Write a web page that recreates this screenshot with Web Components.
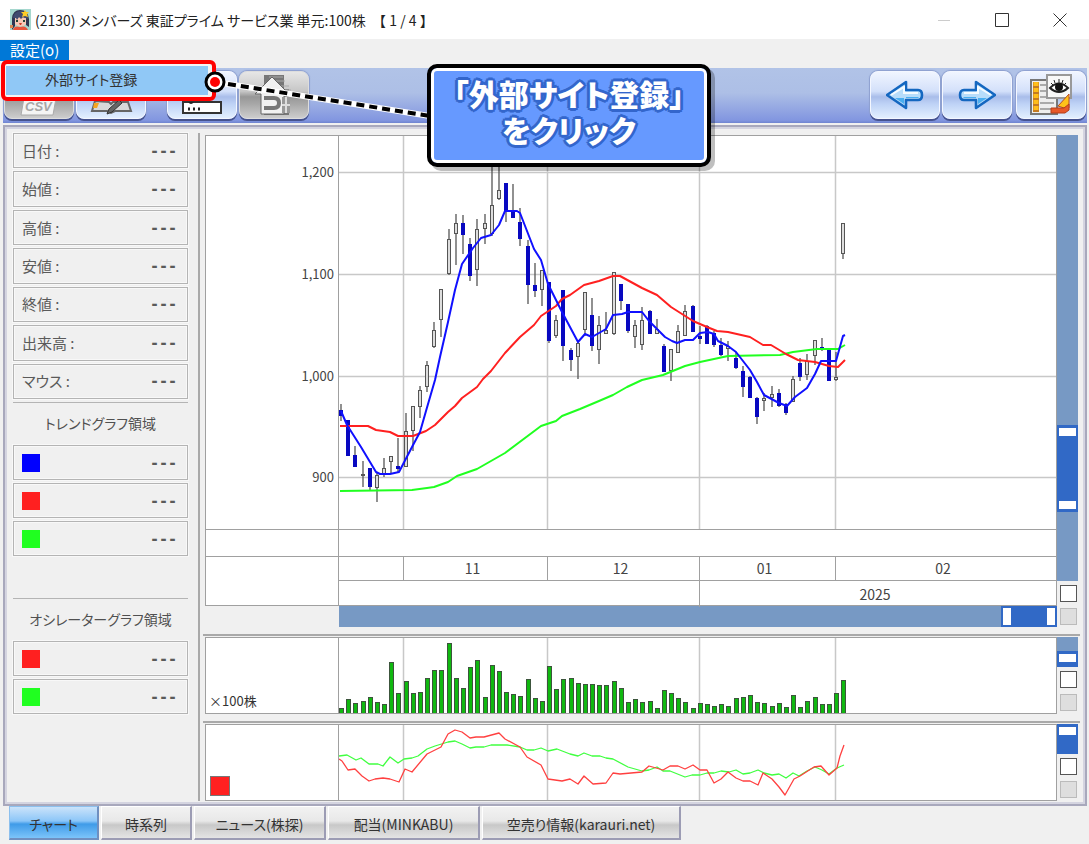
<!DOCTYPE html>
<html lang="ja">
<head>
<meta charset="utf-8">
<title>(2130) メンバーズ</title>
<style>
    :root {
        --line: #a0a0a0;
        --grid: #c8c8c8;
        --track: #7799c4;
        --thumb: #3169c6;
        --text: #505050;
    }
    body {
        margin: 0;
        background: #f0f0f0;
        color: var(--text);
        font-family: "Noto Sans CJK JP", "Liberation Sans", sans-serif;
        font-size: 15px;
        font-feature-settings: "palt";
    }
</style>
</head>
<body>
<chart-window></chart-window>

<script>
// --- Shared base: every element renders its markup into an open shadow root --- //
class BaseElement extends HTMLElement {
    constructor() {
        super();
        this.attachShadow({ mode: 'open' });
    }

    connectedCallback() {
        this.shadowRoot.innerHTML = this.render();
    }
}

// --- Title bar --- //
customElements.define('title-bar', class extends BaseElement {
    render() {
        return `
            <style>
                :host { display: flex; align-items: center; height: 39px; padding-left: 10px; background: #fff; color: #222; }
                .title { flex: 1; margin: 0 0 0 4px; font-size: 14px; font-weight: 400; line-height: 24px; white-space: pre; }
                .page { font-feature-settings: normal; }
                button { width: 58px; height: 39px; padding: 0; border: 0; background: none; }
                svg { display: block; margin: auto; }
                .logo { margin: 0; }
            </style>
            <svg class="logo" width="21" height="21" viewBox="0 0 21 21" aria-hidden="true">
                <rect width="21" height="21" fill="#a5d7ce"/>
                <path d="M2 21V9Q3 1 10 1q8 0 9 9v8l-3-2V9H5v8Z" fill="#303652"/>
                <path d="M5 9q5-2 11 0v6q-5 5-11 0Z" fill="#f7c9b6"/>
                <path d="M3 9q1-7 8-7 6 0 7 8l-5-2-2 2-2-2-2 3-1-2Z" fill="#414a70"/>
                <path d="M6 12h2M13 12h2" stroke="#243" stroke-width="2"/>
                <path d="M9 14h3l-1 2h-1Z" fill="#d23b2b"/>
                <path d="M3 21q1-5 7-3 6-2 8 3Z" fill="#e8553c"/>
                <path d="m15 1 1 2 3 0-2 2 1 3-3-1-3 1 1-3-2-2h3Z" fill="#ffcc25"/>
                <rect x="0" y="16" width="3" height="3" fill="#d98850"/>
            </svg>
            <h1 class="title">(2130) メンバーズ 東証プライム サービス業 単元:100株 <span class="page"> 【 1 / 4 】</span></h1>
            <button aria-label="最小化"><svg width="14" height="14"><path d="M1 7.5h12" stroke="#ccc"/></svg></button>
            <button aria-label="最大化"><svg width="14" height="14"><path d="M.5.5h13v13H.5Z" fill="none" stroke="#333"/></svg></button>
            <button aria-label="閉じる"><svg width="14" height="14"><path d="m.5.5 13 13m0-13-13 13" stroke="#333"/></svg></button>
        `;
    }
});

// --- Menu bar with its open drop-down --- //
customElements.define('menu-bar', class extends BaseElement {
    render() {
        return `
            <style>
                :host { display: block; position: relative; height: 29px; z-index: 2; }
                button { box-sizing: border-box; font: inherit; font-feature-settings: inherit; border: 0; padding: 0; }
                .top { height: 21px; padding: 0 10px; background: #0078d7; color: #fff; line-height: 20px; }
                .menu {
                    position: absolute; left: 1px; top: 21px; width: 205px; padding: 2px 1px 2px;
                    background: #f4f4f4; border: 4px solid #f00; border-radius: 6px;
                }
                .menu button { display: block; width: 202px; height: 29px; padding: 0 0 3px 39px; background: #90c8f6; color: #333; font-size: 14px; line-height: 24px; text-align: left; }
            </style>
            <button class="top" aria-expanded="true">設定(o)</button>
            <div class="menu"><button>外部サイト登録</button></div>
        `;
    }
});

// --- Toolbar --- //
customElements.define('tool-button', class extends BaseElement {
    render() {
        return `
            <style>
                :host { display: block; }
                button {
                    display: grid; place-items: center; box-sizing: border-box; width: 70px; height: 48px; padding: 0;
                    border: 1px solid #f4f7ff; border-radius: 8px;
                    background: linear-gradient(#f0f5ff, #d3e0fa 42%, #a9bdea 54%, #bfd3f6 70%, #e2efff);
                    box-shadow: 0 2px 0 #45528e, 0 0 1px 1px #8d9fcf;
                }
                :host([muted]) button {
                    border-color: #ddd;
                    background: linear-gradient(#e6e6e6, #c6c6c6 42%, #979797 54%, #a8a8a8 70%, #cdcdcd);
                }
            </style>
            <button aria-label="${this.getAttribute('label')}"><slot></slot></button>
        `;
    }
});

customElements.define('tool-bar', class extends BaseElement {
    render() {
        return `
            <style>
                :host {
                    display: flex; gap: 2px; box-sizing: border-box; height: 55px; margin: 0 2px 0 3px; padding: 3px 1px 0;
                    background: linear-gradient(#b1c3e7, #adbfe6 45%, #8296e0 95%, #6f84d0);
                }
                .gap { width: 17px; }
                .space { flex: 1; }
                .last { margin-left: 2px; }
                svg { display: block; }
                text { font: italic bold 13px "Liberation Sans", sans-serif; }
            </style>
            <tool-button muted label="CSV">
                <svg width="44" height="44">
                    <path d="M10 4h25v20H10Z" fill="#ddd" stroke="#888"/>
                    <path d="M7 25h32l-3 17H4Z" fill="#f4f4f4" stroke="#aaa"/>
                    <text x="8" y="38" fill="#a6a6a6">CSV</text>
                </svg>
            </tool-button>
            <tool-button label="編集">
                <svg width="44" height="44">
                    <path d="m6 28 14 1 2 2 2-2h15l3 9H26l-4 2-4-2H3Z" fill="#d8d8d8" stroke="#666" stroke-width="2"/>
                    <path d="m5 30 5 0-2 5H4Z" fill="#f5a623"/>
                    <path d="m18 41 2-5 10-9 3 3-10 9Z" fill="#666" stroke="#333"/>
                </svg>
            </tool-button>
            <div class="gap"></div>
            <tool-button label="一覧">
                <svg width="44" height="44">
                    <rect x="3" y="29" width="38" height="11" fill="#fff" stroke="#333" stroke-width="2"/>
                    <path d="M8 29q3 4 6 0Z" fill="#222"/>
                    <path d="M8 36h2m3 0h2m3 0h2" stroke="#222" stroke-width="3"/>
                </svg>
            </tool-button>
            <tool-button muted label="ホーム">
                <svg width="44" height="44">
                    <path d="M12 2h20v14h5v26H12Z" fill="#777"/>
                    <path d="M17 4h14M17 8h16M22 13h15M25 17h14" stroke="#aaa"/>
                    <path d="m20 4 17 17h-5v20H9V21H3Z" fill="#f1f1f1" stroke="#666"/>
                    <path d="M12 25h10q5 0 5 5t-5 5H12" fill="none" stroke="#777" stroke-width="4"/>
                    <path d="M30 24h8v16h-8Z" fill="#999"/>
                    <path d="M34 24v16m-4-8h8" stroke="#ddd" stroke-width="2"/>
                </svg>
            </tool-button>
            <div class="space"></div>
            <tool-button label="前へ">
                <svg width="38" height="32">
                    <path d="M1 16 20 3v8h12q4 0 4 5t-4 5H20v8Z" fill="#b8ddfa" stroke="#1467c0" stroke-width="2.6" stroke-linejoin="round"/>
                    <path d="m5 16 13-8v6h14" fill="none" stroke="#f5fbff" stroke-width="2"/>
                    <path d="M9 19h9v6ZM20 18h13l-1 1H20Z" fill="#4aaef0"/>
                </svg>
            </tool-button>
            <tool-button label="次へ">
                <svg width="38" height="32">
                    <path d="M37 16 18 3v8H6q-4 0-4 5t4 5h12v8Z" fill="#b8ddfa" stroke="#1467c0" stroke-width="2.6" stroke-linejoin="round"/>
                    <path d="M33 16 20 8v6H6" fill="none" stroke="#f5fbff" stroke-width="2"/>
                    <path d="M29 19h-9v6ZM18 18H5l1 1h12Z" fill="#4aaef0"/>
                </svg>
            </tool-button>
            <tool-button class="last" label="表示設定">
                <svg width="44" height="44">
                    <path d="M2 7h26v34H2Z" fill="#eee" stroke="#777" stroke-width="2"/>
                    <path d="M11 12h8M11 18h14M11 24h12M11 30h14M11 36h16" stroke="#aaa" stroke-width="2"/>
                    <path d="M7 9v30" stroke="#c47b22" stroke-width="6"/>
                    <path d="M7 9v30" stroke="#ffbe1a" stroke-width="5" stroke-dasharray="4 2"/>
                    <path d="M18 2h24v23H18Z" fill="#f8f8f8" stroke="#999" stroke-width="2"/>
                    <path d="M21 15q9-9 18 0-9 8-18 0Z" fill="#fff" stroke="#222" stroke-width="2"/>
                    <circle cx="30" cy="14" r="4" fill="#111"/>
                    <path d="M30 6v5M25 7l1 3m8-3-1 3m-11 0 2 2m13-2-2 2" stroke="#222"/>
                    <path d="m29 33 11-12v14h-5Z" fill="#ffc21a" stroke="#b94a22"/>
                    <path d="M22 35h13l5-4v6l-4 3H22Z" fill="#e8592a" stroke="#b33f1a"/>
                </svg>
            </tool-button>
        `;
    }
});

// --- Side panel --- //
customElements.define('value-row', class extends BaseElement {
    render() {
        const color = this.getAttribute('color');
        return `
            <style>
                :host {
                    display: flex; align-items: center; justify-content: space-between; box-sizing: border-box; min-height: 35px; padding: 0 10px 0 8px;
                    border: 1px solid #b4b4b4; box-shadow: inset 0 0 0 1px #f8f8f8, 0 0 0 1px #f8f8f8; color: #5a5a5a; line-height: 20px;
                }
                i { display: block; width: 18px; height: 18px; background: ${color}; }
                output { font-family: "DejaVu Sans Mono", monospace; font-weight: 700; line-height: 18px; }
            </style>
            ${color ? '<i></i>' : '<span><slot></slot></span>'}
            <output>---</output>
        `;
    }
});

customElements.define('side-panel', class extends BaseElement {
    render() {
        return `
            <style>
                :host { display: block; width: 175px; padding-right: 10px; border-right: 2px solid #a9a9a9; }
                .rows { display: grid; gap: 3px; }
                .quote { height: 266px; }
                h2 { margin: 3px 0 0; padding: 7px 0 9px; border-top: 1px solid #b4b4b4; font-size: 14px; font-weight: 400; line-height: 26px; text-align: center; }
                .trend { margin-bottom: 42px; }
            </style>
            <div class="rows quote">
                <value-row>日付 :</value-row>
                <value-row>始値 :</value-row>
                <value-row>高値 :</value-row>
                <value-row>安値 :</value-row>
                <value-row>終値 :</value-row>
                <value-row>出来高 :</value-row>
                <value-row>マウス :</value-row>
            </div>
            <h2>トレンドグラフ領域</h2>
            <div class="rows trend">
                <value-row color="#0000ff"></value-row>
                <value-row color="#ff2020"></value-row>
                <value-row color="#20ff20"></value-row>
            </div>
            <h2>オシレーターグラフ領域</h2>
            <div class="rows">
                <value-row color="#ff2020"></value-row>
                <value-row color="#20ff20"></value-row>
            </div>
        `;
    }
});

// --- Vertical range bar with the two tick boxes under it --- //
customElements.define('range-column', class extends BaseElement {
    render() {
        const start = this.getAttribute('start');
        const size = this.getAttribute('size');
        return `
            <style>
                :host { display: flex; flex-direction: column; width: 21px; }
                .track { height: ${this.getAttribute('track')}px; background: var(--track); overflow: hidden; }
                .thumb {
                    display: flex; flex-direction: column; justify-content: space-between; box-sizing: border-box;
                    height: ${size}px; margin-top: ${start}px; padding: 3px 2px; background: var(--thumb);
                }
                .thumb b { height: 8px; background: #fff; }
                .boxes { display: grid; gap: 6px; padding: 4px 0 0 3px; }
                input { appearance: none; box-sizing: border-box; width: 17px; height: 17px; margin: 0; border: 1px solid #555; background: #fff; }
                input:disabled { border-color: #bbb; background: #dedede; }
            </style>
            <div class="track"><div class="thumb"><b></b>${size > 40 ? '<b></b>' : ''}</div></div>
            <div class="boxes">
                <input type="checkbox" aria-label="固定">
                <input type="checkbox" aria-label="自動" disabled>
            </div>
        `;
    }
});

// --- Charts --- //
const FIRST_X = 2;
const STEP = 7.175;
const MONTHS = [64, 208, 360, 496];

// high, body top, body bottom, low, falling
const candles = [
    [404,410,415,420,1], [420,420,455,455,1], [446,455,466,466,1], [461,474,475,486,0], [468,468,486,489,1],
    [472,475,487,501,0], [458,468,473,476,0], [456,456,461,473,0], [438,466,468,472,1], [413,431,466,466,0],
    [406,406,430,450,0], [386,390,406,417,0], [361,365,386,391,0], [322,330,346,347,0], [289,289,319,336,0],
    [229,239,273,274,0], [214,223,233,264,0], [215,223,234,253,1], [238,244,275,280,1], [219,229,269,285,0],
    [214,223,228,243,0], [160,205,233,235,0], [150,190,198,199,0], [183,183,210,221,1], [184,211,217,217,1],
    [208,222,238,245,1], [240,246,284,303,1], [263,285,290,296,1], [270,270,289,305,0], [282,282,340,342,1],
    [315,320,335,337,0], [290,290,345,360,1], [348,350,359,370,1], [340,343,356,378,0], [292,292,329,335,0],
    [298,315,345,350,1], [316,325,349,363,0], [312,330,333,333,0], [272,272,333,334,0], [284,284,300,309,1],
    [304,304,330,332,1], [320,325,336,347,0], [307,320,344,349,0], [310,311,333,333,1], [319,329,333,333,0],
    [344,346,371,371,1], [349,349,370,380,0], [325,331,352,352,0], [305,311,335,335,0], [305,306,331,331,1],
    [326,336,338,343,1], [325,326,343,343,1], [331,333,344,346,1], [338,345,354,355,1], [341,346,348,360,0],
    [352,358,367,368,1], [366,371,386,396,1], [376,377,397,397,1], [397,398,416,423,1], [393,398,400,410,0],
    [386,394,397,406,0], [389,393,405,406,1], [403,404,412,414,1], [376,379,401,401,0], [358,363,376,380,1],
    [354,361,374,379,0], [340,340,355,364,0], [338,347,348,350,1], [350,350,380,380,1], [352,377,379,380,0],
    [223,223,253,258,0]
];

const averages = [
    ['#20ff20', '340,491 412,490 427,488 434,487 448,482 457,476 477,469 491,461 505,453 541,426 556,421 562,416 580,409 599,401 613,395 627,387 642,380 663,375 685,366 700,362 728,356 780,355 793,352 817,349 838,349 845,345'],
    ['#ff2020', '340,426 368,426 376,430 390,432 398,436 413,436 426,431 435,425 448,412 455,406 462,398 477,387 483,379 491,371 505,353 520,337 534,325 541,316 556,306 562,299 570,295 584,285 599,281 613,276 620,276 642,288 657,295 671,307 693,321 707,327 717,331 728,332 750,337 763,345 771,345 786,354 798,360 815,362 829,366 838,367 845,360'],
    ['#1010ff', '341,411 347,425 361,447 376,472 380,474 390,474 399,472 412,447 420,432 426,411 435,380 440,357 448,322 455,290 462,264 473,248 481,238 491,235 499,225 505,211 517,211 520,213 534,249 541,260 548,284 562,312 578,342 585,334 592,337 599,333 606,329 613,315 622,314 628,312 642,312 649,321 657,329 665,337 672,341 677,343 685,340 693,340 700,333 708,332 714,334 718,341 728,346 736,352 750,370 757,382 764,395 779,403 787,406 795,397 807,388 815,374 821,361 836,361 843,336 845,335']
];

const volumes = [
    5,14,10,12,16,11,9,51,20,32,20,21,35,43,43,70,35,25,46,53,16,48,42,21,19,17,34,15,12,47,24,34,35,30,29,29,
    28,28,32,25,11,14,11,12,5,23,20,15,11,5,10,9,7,9,7,15,16,18,11,10,7,10,6,18,6,12,16,9,9,20,33
];

const oscillators = [
    ['#40ff40', '0,31 8,30 17,35 22,33 30,39 39,39 44,41 51,32 59,38 65,34 73,33 79,31 88,24 96,21 109,17 116,16 123,19 131,23 137,22 145,22 152,20 168,20 181,22 188,25 195,25 202,23 209,26 218,24 231,29 239,31 245,28 253,31 261,31 267,33 274,34 289,42 303,46 310,45 318,42 324,46 331,46 346,52 353,50 361,50 368,48 375,48 382,46 390,47 397,45 404,49 411,48 419,45 425,48 433,50 440,49 447,53 454,48 460,51 468,46 476,42 483,45 490,49 498,43 505,40'],
    ['#ff4040', '0,34 3,36 9,45 16,44 23,51 30,56 36,54 44,53 51,54 60,57 66,44 73,47 88,29 102,22 109,9 116,5 123,7 131,13 137,12 145,12 160,8 166,14 181,22 188,32 202,40 209,54 223,56 231,54 239,59 245,51 254,59 267,58 274,48 281,49 303,47 310,41 324,45 331,41 339,41 346,44 354,40 361,45 368,45 375,58 382,54 389,47 397,53 404,56 411,56 419,60 424,48 433,54 440,62 446,70 455,54 461,51 475,42 482,41 490,50 498,43 501,31 505,20']
];

const monthLines = () => MONTHS.map(x => `<path class="grid" d="M${x}.5 0v400"/>`).join('');
const polylines = (list, width) => list.map(([color, points]) =>
    `<polyline points="${points}" fill="none" stroke="${color}" stroke-width="${width}" stroke-linejoin="round"/>`).join('');

const chartStyle = `
    :host { display: grid; grid-template-columns: 1fr 21px; padding: 0 2px; }
    .frame { border: 1px solid var(--line); background: #fff; }
    .row { display: grid; grid-template-columns: 133px 1fr; }
    .axis { box-sizing: border-box; border-right: 1px solid var(--line); font-size: 13px; }
    .grid { stroke: var(--grid); stroke-width: 1.5; }
    svg { display: block; width: 100%; overflow: hidden; }
`;

customElements.define('price-chart', class extends BaseElement {
    render() {
        const scale = [[36, '1,200'], [138, '1,100'], [240, '1,000'], [341, '900']];
        const sticks = candles.map(([high, top, bottom, low, falling], i) => {
            const x = Math.round(FIRST_X + i * STEP);
            const body = falling
                ? `<rect x="${x - 2}" y="${top}" width="4" height="${bottom - top + 1}" fill="#0808c0"/>`
                : `<rect x="${x - 1.5}" y="${top + .5}" width="3" height="${Math.max(bottom - top, 1)}" fill="#ddd" stroke="#555"/>`;
            return `<path d="M${x} ${high}V${low + 1}" stroke="#555" stroke-width="1.3"/>${body}`;
        }).join('');
        return `
            <style>
                ${chartStyle}
                .price { height: 393px; border-bottom: 1px solid var(--line); }
                .price svg { height: 393px; }
                .blank { height: 26px; border-bottom: 1px solid var(--line); }
                .dates { height: 48px; color: #444; font-size: 14px; text-align: center; }
                .months { display: grid; grid-template-columns: 65px 144px 152px 136px 1fr; height: 23px; border-bottom: 1px solid var(--line); line-height: 22px; }
                .months span, .years span { box-sizing: border-box; padding-right: 6px; }
                .months span:not(:last-child), .years span:first-child { border-right: 1px solid var(--line); }
                .years { display: grid; grid-template-columns: 361px 1fr; height: 24px; line-height: 26px; }
                .bar { display: flex; justify-content: flex-end; height: 21px; margin-left: 134px; background: var(--track); }
                .thumb { display: flex; justify-content: space-between; box-sizing: border-box; width: 56px; padding: 2px; background: var(--thumb); }
                .thumb b { width: 8px; background: #fff; }
                text { font-size: 13px; fill: #444; text-anchor: end; }
            </style>
            <div>
                <div class="frame">
                    <div class="row price">
                        <div class="axis"><svg>${scale.map(([y, label]) => `<text x="128" y="${y + 5}">${label}</text>`).join('')}</svg></div>
                        <svg>
                            ${scale.map(([y]) => `<line class="grid" x1="0" x2="100%" y1="${y}.5" y2="${y}.5"/>`).join('')}
                            ${monthLines()}
                            <g transform="translate(0 -136)">${sticks}</g>
                            <g transform="translate(-339 -136)">${polylines(averages, 2)}</g>
                        </svg>
                    </div>
                    <div class="row blank"><div class="axis"></div></div>
                    <div class="row dates">
                        <div class="axis"></div>
                        <div>
                            <div class="months"><span></span><span>11</span><span>12</span><span>01</span><span>02</span></div>
                            <div class="years"><span></span><span>2025</span></div>
                        </div>
                    </div>
                </div>
                <div class="bar"><div class="thumb"><b></b><b></b></div></div>
            </div>
            <range-column track="446" start="290" size="87"></range-column>
        `;
    }
});

customElements.define('volume-chart', class extends BaseElement {
    render() {
        return `
            <style>
                ${chartStyle}
                .row, .row svg { height: 75px; }
                .axis { display: flex; align-items: flex-end; padding: 0 0 3px 3px; color: #333; }
            </style>
            <div class="frame row">
                <div class="axis">×100株</div>
                <svg>
                    ${monthLines()}
                    ${volumes.map((h, i) => `<rect x="${Math.round(i * STEP) + .5}" y="${75.5 - h}" width="4" height="${h}" fill="#10b810" stroke="#3c553c"/>`).join('')}
                </svg>
            </div>
            <range-column track="30" start="14" size="16"></range-column>
        `;
    }
});

customElements.define('oscillator-chart', class extends BaseElement {
    render() {
        return `
            <style>
                ${chartStyle}
                .row, .row svg { height: 75px; }
                .axis { display: flex; align-items: flex-end; padding: 0 0 4px 4px; }
                i { width: 18px; height: 18px; border: 1px solid #777; background: #ff2020; }
            </style>
            <div class="frame row">
                <div class="axis"><i></i></div>
                <svg>${monthLines()}${polylines(oscillators, 1.3)}</svg>
            </div>
            <range-column track="30" start="0" size="30"></range-column>
        `;
    }
});

// --- Bottom tabs --- //
customElements.define('tab-bar', class extends BaseElement {
    render() {
        const tabs = ['チャート', '時系列', 'ニュース(株探)', '配当(MINKABU)', '空売り情報(karauri.net)'];
        return `
            <style>
                :host { display: grid; grid-template-columns: 90px 91px 132px 152px 199px; gap: 2px; padding: 0 9px 4px; }
                button {
                    height: 34px; padding: 3px 0 0; border: 1px solid #fff; border-right: 2px solid #9c9cb4; border-bottom: 2px solid #9c9cb4;
                    background: linear-gradient(#f2f2f2, #e8e8e8 45%, #c8c8c8 58%, #e4e4e4);
                    color: #333; font: inherit; font-size: 14px; font-feature-settings: inherit;
                }
                button[aria-selected="true"] { border-color: #8cc0ee #6f8fc0 #6f8fc0 #8cc0ee; background: linear-gradient(#cbe3fa, #8cc6f8 45%, #3f9be8 55%, #7cc4fa); }
            </style>
            ${tabs.map((tab, i) => `<button role="tab" aria-selected="${i === 0}">${tab}</button>`).join('')}
        `;
    }
});

// --- Callout that points at the menu item --- //
customElements.define('click-callout', class extends BaseElement {
    render() {
        return `
            <style>
                :host { position: absolute; left: 204px; top: 64px; z-index: 3; display: flex; }
                svg { display: block; width: 226px; height: 60px; margin-right: -3px; }
                p {
                    position: relative; box-sizing: border-box; width: 284px; margin: 0; padding: 10px 0 13px; border: 4px solid #000; border-radius: 10px;
                    background: #6699ff; box-shadow: inset 0 0 0 3px #fff, 4px 4px 0 rgba(0, 0, 0, .25);
                    color: #fff; font-family: "Liberation Sans", "Noto Sans CJK JP", sans-serif; font-size: 30px; font-weight: 900; line-height: 36px; text-align: center;
                    text-shadow: 3px 0 #3366cc, -3px 0 #3366cc, 0 3px #3366cc, 0 -3px #3366cc,
                        2px 2px #3366cc, -2px 2px #3366cc, 2px -2px #3366cc, -2px -2px #3366cc;
                }
            </style>
            <svg aria-hidden="true">
                <path d="m11 18 215 34" stroke="#fff" stroke-width="6"/>
                <path d="m24 20 202 32" stroke="#000" stroke-width="4" stroke-dasharray="8 5"/>
                <circle cx="11" cy="18" r="9" fill="#fff" stroke="#000" stroke-width="3"/>
                <circle cx="11" cy="18" r="5" fill="#f00"/>
            </svg>
            <p>「外部サイト登録」<br>をクリック</p>
        `;
    }
});

// --- Window --- //
customElements.define('chart-window', class extends BaseElement {
    render() {
        return `
            <style>
                :host { display: block; position: relative; }
                main {
                    display: flex; margin: 2px 2px 0 3px; padding: 6px 5px 3px 8px; border: 2px solid #a8a8bc;
                    box-shadow: inset 0 0 0 2px #d4d4e0;
                }
                .charts { flex: 1; min-width: 0; margin-left: 3px; padding-top: 2px; }
                hr { height: 2px; margin: 7px 0 1px; border: 0; background: #a9a9a9; }
            </style>
            <title-bar></title-bar>
            <menu-bar></menu-bar>
            <tool-bar></tool-bar>
            <main>
                <side-panel></side-panel>
                <div class="charts">
                    <price-chart></price-chart>
                    <hr>
                    <volume-chart></volume-chart>
                    <hr>
                    <oscillator-chart></oscillator-chart>
                </div>
            </main>
            <tab-bar></tab-bar>
            <click-callout></click-callout>
        `;
    }
});
</script>
</body>
</html>
